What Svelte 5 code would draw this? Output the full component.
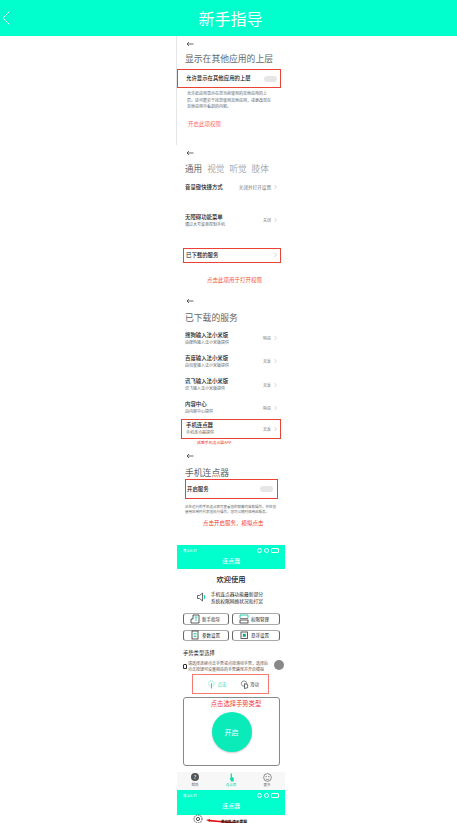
<script>
	const tabs = ['通用', '视觉', '听觉', '肢体'];
	const services = [
		{ name: '搜狗输入法小米版', sub: '由搜狗输入法小米版提供', state: '响应' },
		{ name: '百度输入法小米版', sub: '由百度输入法小米版提供', state: '无反' },
		{ name: '讯飞输入法小米版', sub: '讯飞输入法小米版提供', state: '无反' },
		{ name: '内容中心', sub: '由内容中心提供', state: '响应' }
	];
	const tools = [
		{ label: '新手指导', icon: 'doc' },
		{ label: '权限管理', icon: 'stack' },
		{ label: '参数设置', icon: 'list' },
		{ label: '悬浮设置', icon: 'square' }
	];
</script>

{#snippet back()}
	<svg class="arrow" viewBox="0 0 8 6" width="8" height="6">
		<path d="M7.5 3H1M3 1 1 3l2 2" fill="none" stroke="#444" stroke-width="0.8" />
	</svg>
{/snippet}

{#snippet chevron()}
	<svg class="chevron" viewBox="0 0 3 6" width="3" height="6">
		<path d="M.5 1 2.5 3 .5 5" fill="none" stroke="#bbb" stroke-width="0.6" />
	</svg>
{/snippet}

{#snippet toolIcon(name)}
	<svg viewBox="0 0 10 10" width="10" height="10">
		{#if name === 'doc'}
			<path d="M3 1h6v8H1V5h2z" fill="none" stroke="#333" stroke-width="0.8" />
			<path d="M4.500 3h3M6 3v4" fill="none" stroke="#14c79e" stroke-width="0.8" />
		{:else if name === 'stack'}
			<path d="M1 4V1h8v3" fill="none" stroke="#14c79e" stroke-width="0.9" />
			<path d="M1 4.500h8" stroke="#333" stroke-width="0.6" />
			<rect x="1" y="6" width="8" height="3" fill="none" stroke="#333" stroke-width="0.8" />
		{:else if name === 'list'}
			<rect x="2" y="1" width="6" height="8" fill="none" stroke="#333" stroke-width="0.8" />
			<path d="M3.500 3.500h3M3.500 5h3M3.500 6.500h3" stroke="#14c79e" stroke-width="0.7" />
		{:else}
			<rect x="2" y="2" width="6.500" height="6.500" fill="none" stroke="#333" stroke-width="0.8" />
			<rect x="3.800" y="3.800" width="3" height="3" fill="#14a884" />
		{/if}
	</svg>
{/snippet}

{#snippet appBar()}
	<div class="status">
		<span>晚上6:37</span>
		<span class="status-icons">
			<i></i><i></i><i class="battery"></i>
		</span>
	</div>
	<div class="app-title">连点器</div>
{/snippet}

<div class="page">
	<header class="header">
		<svg class="back" viewBox="0 0 10 16" width="10" height="16">
			<path d="M8.5 1.5 2 8l6.500 6.500" fill="none" stroke="#fff" stroke-width="1" />
		</svg>
		<h1>新手指导</h1>
		<span></span>
	</header>

	<main class="guide">
		<section class="shot shot-overlay">
			{@render back()}
			<h2>显示在其他应用的上层</h2>
			<div class="mark overlay-row">
				<b>允许显示在其他应用的上层</b>
				<span class="toggle"></span>
			</div>
			<p class="desc overlay-desc">允许此应用显示在您当前使用的其他应用的上层。这可能会干扰您使用其他应用，或更改您在其他应用中看到的内容。</p>
			<p class="note overlay-note">开启此项权限</p>
		</section>

		<section class="shot shot-access">
			{@render back()}
			<div class="tabs">
				{#each tabs as tab, i}
					<span class:muted={i > 0}>{tab}</span>
				{/each}
			</div>
			<div class="row shortcut">
				<b>音量键快捷方式</b>
				<span class="value wide">关闭并打开设置 {@render chevron()}</span>
			</div>
			<div class="row menu">
				<div>
					<b>无障碍功能菜单</b>
					<small>通过大号菜单控制手机</small>
				</div>
				<span class="value">关闭 {@render chevron()}</span>
			</div>
			<div class="mark download-row">
				<b>已下载的服务</b>
				{@render chevron()}
			</div>
			<p class="note access-note">点击此项用于打开权限</p>
		</section>

		<section class="shot shot-services">
			{@render back()}
			<h2>已下载的服务</h2>
			<div class="list">
				{#each services as item}
					<div class="row service">
						<div>
							<b>{item.name}</b>
							<small>{item.sub}</small>
						</div>
						<span class="value">{item.state} {@render chevron()}</span>
					</div>
				{/each}
			</div>
			<div class="mark row clicker-row">
				<div>
					<b>手机连点器</b>
					<small>手机连点器提供</small>
				</div>
				<span class="value">无反 {@render chevron()}</span>
			</div>
			<p class="tiny-note">成熟手机连点器APP</p>
		</section>

		<section class="shot shot-clicker">
			{@render back()}
			<h2>手机连点器</h2>
			<div class="mark switch-row">
				<b>开启服务</b>
				<span class="toggle"></span>
			</div>
			<p class="desc switch-desc">正在运行的手机连点器可查看您的屏幕内容和操作，并在您使用应用时代表您执行操作，您可以随时停用此服务。</p>
			<p class="note switch-note">点击开启服务，模拟点击</p>
		</section>

		<section class="app">
			<div class="app-bar">
				{@render appBar()}
			</div>

			<h3>欢迎使用</h3>
			<div class="intro">
				<svg viewBox="0 0 10 10" width="10" height="10">
					<path d="M.5 3.500h2L5.500 1v8l-3-2.500h-2z" fill="none" stroke="#444" stroke-width="0.8" />
					<path d="M7 3c1 1.300 1 2.700 0 4" fill="none" stroke="#0dd8a8" stroke-width="1.100" />
				</svg>
				<p>手机连点器功能最新部分<br />系统权限网络状况和打赏</p>
			</div>

			<div class="tools">
				{#each tools as tool}
					<div class="tool">
						{@render toolIcon(tool.icon)}
						<span>{tool.label}</span>
					</div>
				{/each}
			</div>

			<div class="gesture-title">手势类型选择</div>
			<div class="gesture-desc">
				<span class="lock"></span>
				<p>请选择连续点击手势或点按滑动手势，选择后点击按钮可设置相应的手势路径并开启模拟</p>
				<span class="float-dot"></span>
			</div>

			<div class="mark gesture-pick">
				<span class="pick active">
					<svg viewBox="0 0 10 10" width="9" height="9">
						<circle cx="5" cy="4" r="3" fill="none" stroke="#25d9b0" stroke-width="0.8" stroke-dasharray="1 1" />
						<path d="M5 3.500V9.500" stroke="#25d9b0" stroke-width="1.200" />
					</svg>
					点击
				</span>
				<span class="pick">
					<svg viewBox="0 0 10 10" width="9" height="9">
						<circle cx="4.500" cy="4" r="3" fill="none" stroke="#555" stroke-width="0.7" />
						<path d="M5 4v5.500l3.500-1V5z" fill="#fff" stroke="#333" stroke-width="0.8" />
					</svg>
					滑动
				</span>
			</div>

			<div class="start-box">
				<p class="start-note">点击选择手势类型</p>
				<div class="start">开启</div>
			</div>

			<nav class="tabbar">
				<div class="tab">
					<span class="help">?</span>
					<span>帮助</span>
				</div>
				<div class="tab current">
					<svg viewBox="0 0 8 10" width="7" height="9">
						<path d="M3 .5h1.500v4l2 .7V9.500H3.500L2 6 3 5.500z" fill="#14d9ab" />
					</svg>
					<span>连点器</span>
				</div>
				<div class="tab">
					<svg viewBox="0 0 10 10" width="9" height="9">
						<circle cx="5" cy="5" r="4.300" fill="none" stroke="#555" stroke-width="0.7" />
						<circle cx="3.500" cy="4" r=".6" fill="#555" />
						<circle cx="6.500" cy="4" r=".6" fill="#555" />
						<path d="M3 6.500c1 1 3 1 4 0" fill="none" stroke="#555" stroke-width="0.7" />
					</svg>
					<span>更多</span>
				</div>
			</nav>

			<div class="app-bar last">
				{@render appBar()}
			</div>

			<div class="target">
				<svg viewBox="0 0 10 10" width="10" height="10">
					<circle cx="5" cy="5" r="4" fill="none" stroke="#222" stroke-width="0.8" stroke-dasharray="1.500 0.800" />
					<circle cx="5" cy="5" r="1.600" fill="none" stroke="#222" stroke-width="0.8" />
				</svg>
				<div class="trace">
					<svg viewBox="0 0 56 8" width="56" height="8">
						<path d="M0 1 4 0 4 .8 56 6 56 7 4 2.400 4 3z" fill="#e01212" />
					</svg>
					<span class="trace-label">滑动轨迹示意图</span>
				</div>
			</div>
		</section>
	</main>
</div>

<style>
	:global(body) {
		margin: 0;
		background: #fff;
	}

	.page {
		width: 457px;
		height: 823px;
		overflow: hidden;
		font-family: 'Noto Sans CJK SC', 'Noto Sans', sans-serif;
		color: #222;
	}

	.header {
		display: grid;
		grid-template-columns: 34px 1fr 30px;
		align-items: center;
		height: 36px;
		background: #00ffcc;
	}

	.header h1 {
		margin: 0;
		font-size: 16px;
		font-weight: 400;
		text-align: center;
		color: #fff;
	}

	.back {
		margin-left: 1px;
	}

	.guide {
		display: flex;
		flex-direction: column;
		width: 108px;
		margin-left: 177px;
	}

	.shot {
		box-sizing: border-box;
		padding-left: 8px;
		flex-shrink: 0;
	}

	.arrow {
		display: block;
		margin-left: 1px;
	}

	h2 {
		margin: 6px 0 0;
		font-size: 8.800px;
		line-height: 12px;
		font-weight: 400;
		color: #666;
		white-space: nowrap;
	}

	b {
		display: block;
		font-size: 5.400px;
		line-height: 7px;
		font-weight: 500;
		white-space: nowrap;
	}

	small {
		display: block;
		font-size: 4px;
		line-height: 6px;
		color: #666;
		white-space: nowrap;
	}

	.mark {
		box-sizing: border-box;
		border: 1px solid #ea4335;
	}

	.toggle {
		width: 13px;
		height: 6px;
		border-radius: 3px;
		background: #e6e6e6;
	}

	.desc {
		margin: 0;
		font-size: 4px;
		color: #666;
	}

	.note {
		margin: 0;
		font-size: 5.500px;
		line-height: 8px;
		color: #f23b2f;
		white-space: nowrap;
	}

	.row {
		display: flex;
		align-items: center;
		justify-content: space-between;
	}

	.value {
		display: flex;
		align-items: center;
		gap: 3px;
		font-size: 4px;
		color: #777;
		white-space: nowrap;
	}

	.value.wide {
		font-size: 4.600px;
	}

	.shot-overlay {
		height: 109px;
		padding-top: 5px;
		border-left: 1px solid #e6e6e6;
		margin-left: -1px;
	}

	.overlay-row {
		display: flex;
		align-items: center;
		justify-content: space-between;
		width: 104px;
		height: 19px;
		margin: 4px 0 0 -8px;
		padding: 0 3px 0 8px;
	}

	.overlay-desc {
		width: 84px;
		margin: 2px 0 0 2px;
		line-height: 6.500px;
	}

	.overlay-note {
		margin: 10.500px 0 0 3px;
		color: #ff6a5e;
	}

	.shot-access {
		height: 145px;
		padding-top: 5px;
	}

	.tabs {
		display: flex;
		gap: 5px;
		margin-top: 6px;
		font-size: 8.600px;
		line-height: 12px;
		color: #666;
	}

	.tabs .muted {
		color: #aaa;
	}

	.shortcut {
		width: 92px;
		margin-top: 9.500px;
	}

	.menu {
		width: 92px;
		margin-top: 23px;
	}

	.download-row {
		display: flex;
		align-items: center;
		justify-content: space-between;
		width: 98px;
		height: 15px;
		margin: 21px 0 0 -2px;
		padding: 0 3px 0 2px;
	}

	.access-note {
		margin: 13.500px 0 0 22px;
		color: #f4543f;
	}

	.shot-services {
		height: 157px;
		padding-top: 8px;
	}

	.shot-services h2 {
		margin-top: 8px;
	}

	.list {
		display: flex;
		flex-direction: column;
		gap: 10.300px;
		width: 92px;
		margin-top: 7.500px;
	}

	.service {
		height: 13px;
	}

	.clicker-row {
		width: 100px;
		height: 20px;
		margin: 4.600px 0 0 -4px;
		padding: 0 3px 0 4px;
	}

	.tiny-note {
		margin: 0 0 0 12px;
		font-size: 3.900px;
		line-height: 6px;
		color: #f23b2f;
		white-space: nowrap;
	}

	.shot-clicker {
		height: 98px;
		padding-top: 6px;
	}

	.shot-clicker h2 {
		margin-top: 8px;
	}

	.switch-row {
		display: flex;
		align-items: center;
		justify-content: space-between;
		width: 93px;
		height: 20px;
		padding: 0 4px 0 1px;
	}

	.switch-desc {
		width: 92px;
		margin-top: 4.500px;
		font-size: 3.500px;
		line-height: 5px;
	}

	.switch-note {
		margin: 5.500px 0 0 18px;
	}

	.app {
		display: flex;
		flex-direction: column;
		flex-shrink: 0;
	}

	.app-bar {
		height: 24px;
		background: #00ffcc;
		color: #fff;
	}

	.app-bar.last {
		height: 25px;
	}

	.status {
		display: flex;
		justify-content: space-between;
		align-items: center;
		height: 10px;
		padding: 0 6px;
		font-size: 3.500px;
	}

	.status-icons {
		display: flex;
		gap: 2px;
		align-items: center;
	}

	.status-icons i {
		width: 3px;
		height: 3px;
		border: 0.5px solid #fff;
		border-radius: 50%;
	}

	.status-icons .battery {
		width: 6px;
		border-radius: 1px;
	}

	.app-title {
		font-size: 6px;
		line-height: 12px;
		text-align: center;
	}

	h3 {
		margin: 5px 0 0;
		font-size: 7.300px;
		line-height: 10px;
		font-weight: 500;
		text-align: center;
	}

	.intro {
		display: flex;
		align-items: center;
		justify-content: center;
		gap: 4px;
		margin: 5.500px 0 0 -2px;
	}

	.intro p {
		margin: 0;
		font-size: 4.750px;
		line-height: 7px;
		white-space: nowrap;
	}

	.tools {
		display: grid;
		grid-template-columns: 46px 48px;
		gap: 5px 3px;
		margin: 9.500px 0 0 6px;
	}

	.tool {
		box-sizing: border-box;
		display: flex;
		align-items: center;
		gap: 2px;
		height: 11.500px;
		padding-left: 6px;
		border: 1px solid #666;
		border-color: #aaa #666;
		border-radius: 3px;
		font-size: 4.500px;
		white-space: nowrap;
	}

	.gesture-title {
		margin: 8.500px 0 0 6px;
		font-size: 5.300px;
		line-height: 7px;
	}

	.gesture-desc {
		position: relative;
		display: flex;
		align-items: center;
		gap: 1.500px;
		width: 88px;
		margin: 4.500px 0 0 6px;
	}

	.gesture-desc p {
		flex: 1;
		margin: 0;
		font-size: 4px;
		line-height: 5.500px;
		color: #555;
	}

	.lock {
		flex-shrink: 0;
		width: 1.500px;
		height: 2.500px;
		border: 0.8px solid #333;
		border-radius: 1px 1px 0 0;
	}

	.float-dot {
		position: absolute;
		top: -1.500px;
		right: -13px;
		width: 10px;
		height: 10px;
		border-radius: 50%;
		background: #888;
	}

	.gesture-pick {
		display: flex;
		align-items: center;
		gap: 13px;
		width: 77px;
		height: 20px;
		margin: 2px 0 0 15px;
		padding-left: 14px;
		border-color: #f47a72;
	}

	.pick {
		display: flex;
		align-items: center;
		gap: 1.500px;
		font-size: 4.500px;
		color: #555;
		white-space: nowrap;
	}

	.pick.active {
		color: #25d9b0;
	}

	.start-box {
		box-sizing: border-box;
		display: flex;
		flex-direction: column;
		align-items: center;
		width: 97px;
		height: 69px;
		margin: 3px 0 0 6px;
		border: 1px solid #888;
		border-radius: 3px;
	}

	.start-note {
		margin: 2px 0 0 9px;
		font-size: 6.300px;
		line-height: 8px;
		color: #f23b2f;
		white-space: nowrap;
	}

	.start {
		width: 40px;
		height: 40px;
		margin-top: 4px;
		border-radius: 50%;
		background: #0beab9;
		box-shadow: 0 1px 2px rgba(0, 0, 0, 0.2);
		color: #fff;
		font-size: 7px;
		line-height: 40px;
		text-align: center;
	}

	.tabbar {
		display: grid;
		grid-template-columns: repeat(3, 1fr);
		height: 18px;
		margin-top: 6px;
		background: #f7f7f7;
		padding-top: 1px;
		box-sizing: border-box;
	}

	.tab {
		display: flex;
		flex-direction: column;
		align-items: center;
		font-size: 3.500px;
		line-height: 5px;
		color: #666;
	}

	.tab.current {
		color: #14d9ab;
	}

	.help {
		width: 8px;
		height: 8px;
		margin-bottom: 1px;
		border-radius: 50%;
		background: #555;
		color: #fff;
		font-size: 5px;
		line-height: 8px;
		text-align: center;
	}

	.target {
		display: flex;
		align-items: flex-start;
		gap: 3px;
		height: 8px;
		margin-left: 15.500px;
	}

	.target > svg {
		margin-top: -1px;
	}

	.trace {
		position: relative;
		width: 56px;
		height: 8px;
		padding-top: 4px;
		box-sizing: border-box;
	}

	.trace svg {
		display: block;
	}

	.trace-label {
		position: absolute;
		top: 5px;
		left: 15px;
		font-size: 3.800px;
		line-height: 3px;
		font-weight: 700;
		color: #111;
		white-space: nowrap;
	}
</style>
